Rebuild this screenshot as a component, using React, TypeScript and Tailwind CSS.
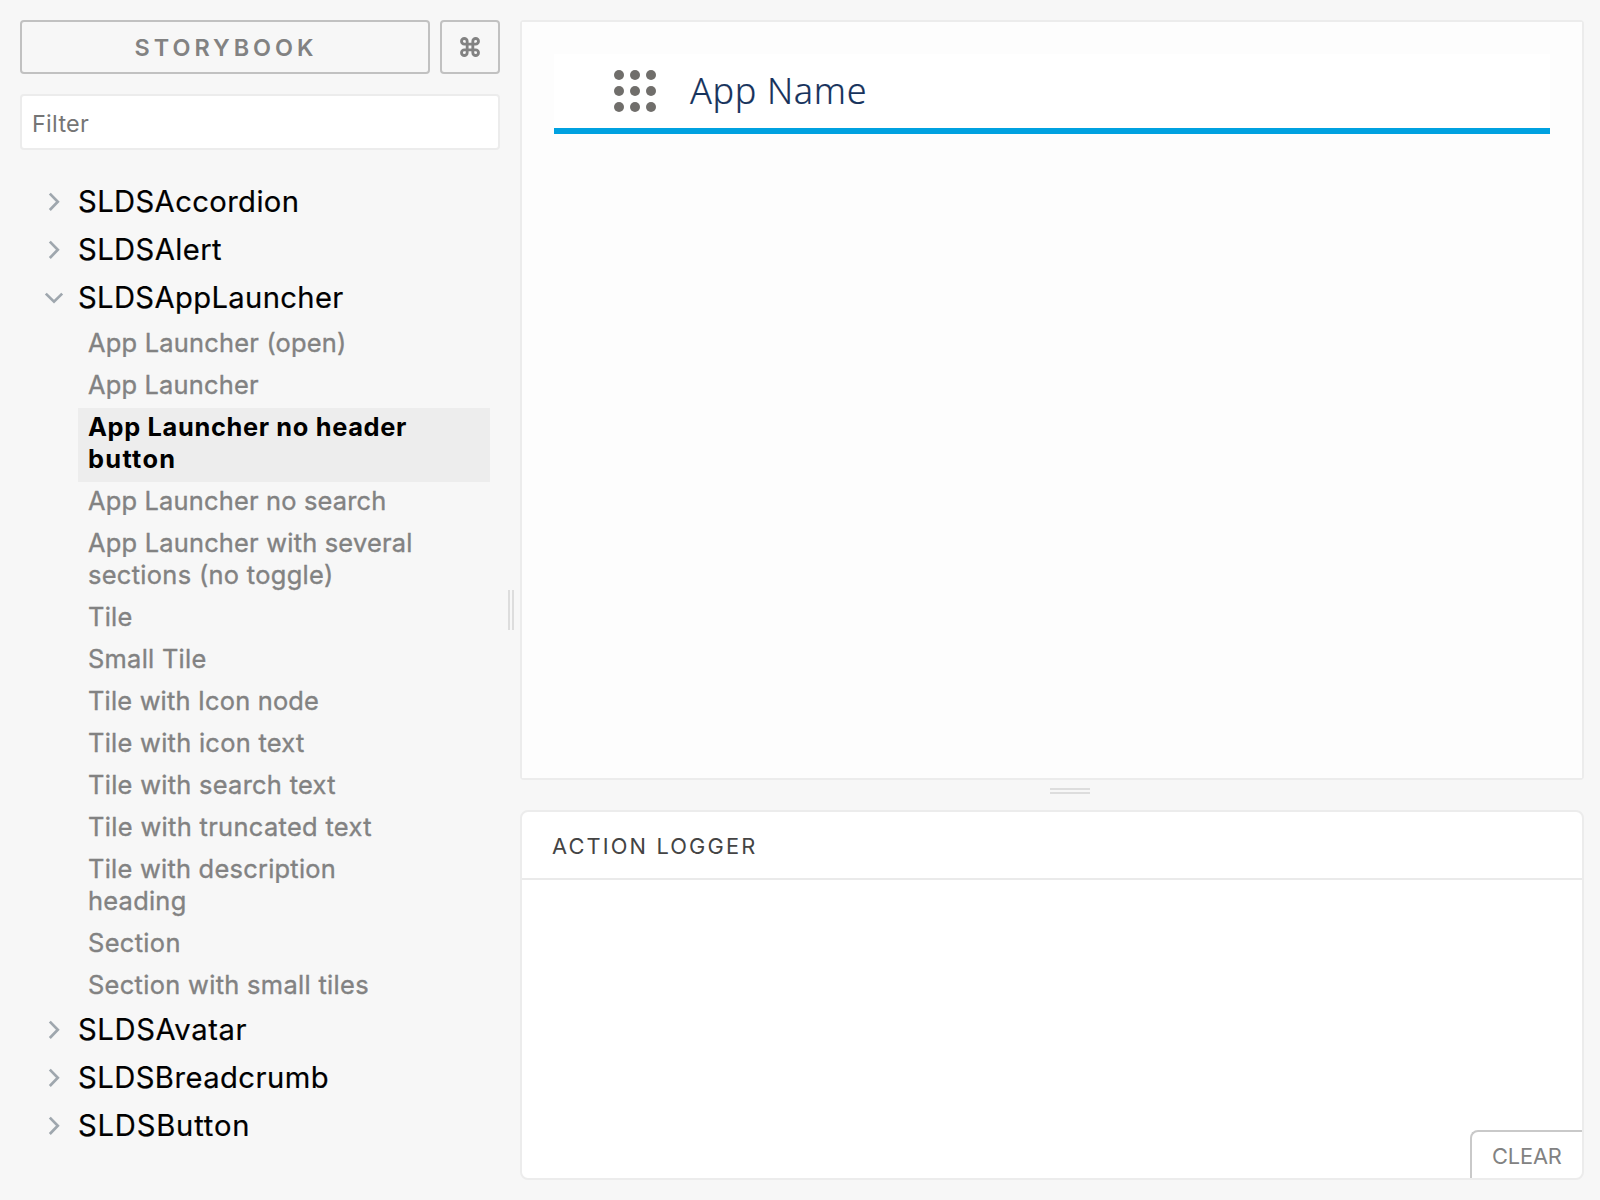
type Line = { text: string; spacing: string };
type Story = { lines: Line[]; active?: boolean };

const stories: Story[] = [
  { lines: [{ text: "App Launcher (open)", spacing: "tracking-[0.23px]" }] },
  { lines: [{ text: "App Launcher", spacing: "tracking-[0.2px]" }] },
  {
    active: true,
    lines: [
      { text: "App Launcher no header", spacing: "tracking-[0.65px]" },
      { text: "button", spacing: "tracking-[1.3px]" },
    ],
  },
  { lines: [{ text: "App Launcher no search", spacing: "tracking-[0.2px]" }] },
  {
    lines: [
      { text: "App Launcher with several", spacing: "tracking-[0.22px]" },
      { text: "sections (no toggle)", spacing: "tracking-[0.33px]" },
    ],
  },
  { lines: [{ text: "Tile", spacing: "tracking-[0.25px]" }] },
  { lines: [{ text: "Small Tile", spacing: "tracking-[0.28px]" }] },
  { lines: [{ text: "Tile with Icon node", spacing: "tracking-[0.2px]" }] },
  { lines: [{ text: "Tile with icon text", spacing: "tracking-[0.29px]" }] },
  { lines: [{ text: "Tile with search text", spacing: "tracking-[0.3px]" }] },
  { lines: [{ text: "Tile with truncated text", spacing: "tracking-[0.35px]" }] },
  {
    lines: [
      { text: "Tile with description", spacing: "tracking-[0.26px]" },
      { text: "heading", spacing: "tracking-[0.27px]" },
    ],
  },
  { lines: [{ text: "Section", spacing: "tracking-[0.35px]" }] },
  { lines: [{ text: "Section with small tiles", spacing: "tracking-[0.33px]" }] },
];

const kindsBefore = [
  { name: "SLDSAccordion", spacing: "tracking-[0.4px]" },
  { name: "SLDSAlert", spacing: "tracking-[0.42px]" },
];
const kindsAfter = [
  { name: "SLDSAvatar", spacing: "tracking-[0.62px]" },
  { name: "SLDSBreadcrumb", spacing: "tracking-[0.46px]" },
  { name: "SLDSButton", spacing: "tracking-[0.8px]" },
];

function Chevron({ open }: { open?: boolean }) {
  return (
    <svg width="20" height="20" viewBox="0 0 20 20" fill="none" stroke="#9fa7ae" strokeWidth="2.7" className="shrink-0">
      <path d={open ? "M1.8 6.6 L10 14.6 L18.2 6.6" : "M5.8 2.6 L13.8 10.8 L5.8 19"} />
    </svg>
  );
}

function Kind({ name, spacing, open }: { name: string; spacing: string; open?: boolean }) {
  return (
    <div className="mb-[6px] flex h-[42px] items-center gap-[14px] pl-[44px] text-[29.2px] leading-[42px] text-black [-webkit-text-stroke:0.2px]">
      <Chevron open={open} />
      <span className={"pt-[2px] " + spacing}>{name}</span>
    </div>
  );
}

function StoryRow({ story }: { story: Story }) {
  return (
    <div
      className={
        "ml-[78px] mr-[10px] flex flex-col items-start pb-[7px] pl-[10px] pt-[3px] text-[25.4px] leading-8 " +
        (story.active ? "bg-[#ededed] font-bold text-black" : "text-[#828282] [-webkit-text-stroke:0.35px]")
      }
    >
      {story.lines.map((l) => (
        <span key={l.text} className={"whitespace-nowrap " + l.spacing}>
          {l.text}
        </span>
      ))}
    </div>
  );
}

function CommandIcon() {
  return (
    <svg width="20" height="20" viewBox="1.4 1.4 21.2 21.2" fill="none" stroke="#828282" strokeWidth="3">
      <path d="M15 6v12a3 3 0 1 0 3-3H6a3 3 0 1 0 3 3V6a3 3 0 1 0-3 3h12a3 3 0 1 0-3-3" />
    </svg>
  );
}

function LauncherIcon() {
  const dots = [5, 21, 37];
  return (
    <svg width="42" height="42" viewBox="0 0 42 42" fill="#706e6b" className="shrink-0">
      {dots.flatMap((y) => dots.map((x) => <circle key={`${x}-${y}`} cx={x} cy={y} r="5" />))}
    </svg>
  );
}

export default function App() {
  return (
    <div className="flex h-[1200px] w-[1600px] overflow-hidden bg-[#f7f7f7] font-['Inter',sans-serif]">
      <aside className="flex w-[500px] shrink-0 flex-col pt-5">
        <div className="ml-5 flex gap-[10px]">
          <button className="h-[54px] w-[410px] rounded-[4px] border-2 border-[#c1c1c1] pl-[2px] pt-[2px] text-[23.4px] font-semibold leading-none tracking-[4px] text-[#828282]">
            STORYBOOK
          </button>
          <button className="flex h-[54px] w-[60px] items-center justify-center rounded-[4px] border-2 border-[#c1c1c1]">
            <CommandIcon />
          </button>
        </div>
        <div className="mb-[30px] ml-5 mt-5 flex h-14 items-center rounded-[4px] border-2 border-[#ececec] bg-white pl-[10px] pt-[4px] text-[23.4px] leading-7 tracking-[0.3px] text-[#757575]">
          Filter
        </div>
        {kindsBefore.map((k) => (
          <Kind key={k.name} {...k} />
        ))}
        <Kind name="SLDSAppLauncher" spacing="tracking-[0.36px]" open />
        <div>
          {stories.map((s, i) => (
            <StoryRow key={i} story={s} />
          ))}
        </div>
        {kindsAfter.map((k) => (
          <Kind key={k.name} {...k} />
        ))}
      </aside>

      <div className="flex w-5 shrink-0 justify-center pt-[590px]">
        <div className="ml-[2px] h-10 w-[6px] border-x-2 border-[#dddddd]" />
      </div>

      <main className="flex w-[1064px] shrink-0 flex-col pt-5">
        <section className="h-[760px] rounded-[4px] border-2 border-[#ececec]">
          <div className="h-full bg-[#fdfdfd] p-8">
            <header className="flex h-[80px] items-start border-b-[6px] border-[#00a1e0] bg-white pl-[60px] pt-4">
              <LauncherIcon />
              <h1 className="ml-[34px] font-['Noto_Sans',sans-serif] text-[36px] font-light leading-[42px] tracking-[0.65px] text-[#16325c] [-webkit-text-stroke:0.2px]">
                App Name
              </h1>
            </header>
          </div>
        </section>

        <div className="flex h-[30px] justify-center pt-2">
          <div className="ml-9 h-[6px] w-10 border-y-2 border-[#dddddd]" />
        </div>

        <section className="flex h-[370px] flex-col overflow-hidden rounded-[8px] border-2 border-[#ececec] bg-white">
          <div className="flex h-[68px] shrink-0 items-center border-b-2 border-[#eaeaea] pl-[30px] pt-[2px] text-[21.8px] tracking-[2.15px] text-[#444444]">
            ACTION LOGGER
          </div>
          <div className="flex flex-1 items-end justify-end">
            <button className="h-[48px] w-[112px] rounded-tl-[8px] border-l-2 border-t-2 border-[#c9c9c9] pl-[20px] pt-[3px] text-left text-[21.8px] leading-none tracking-[-0.15px] text-[#828282]">
              CLEAR
            </button>
          </div>
        </section>
      </main>
    </div>
  );
}
